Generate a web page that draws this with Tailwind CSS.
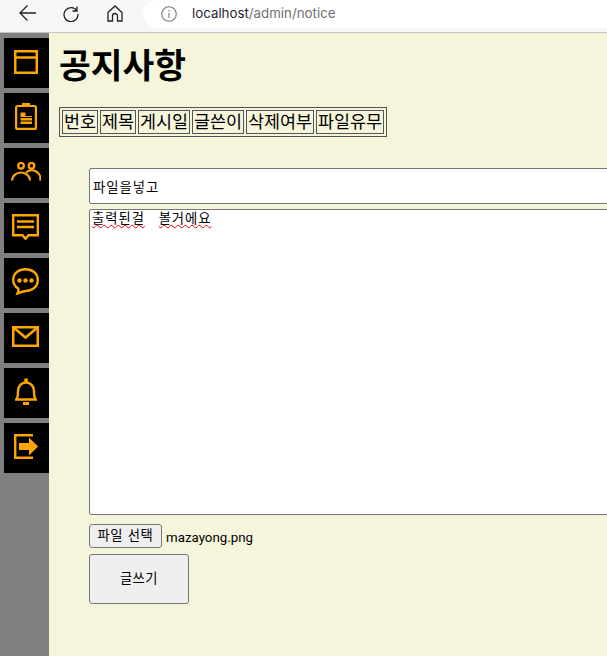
<!DOCTYPE html>
<html lang="ko">
  <head>
    <meta charset="UTF-8" />
    <title>공지사항</title>
    <script src="https://cdn.jsdelivr.net/npm/@tailwindcss/browser@4"></script>
  </head>
  <body class="w-[607px] h-[656px] overflow-hidden font-['Liberation_Sans','Noto_Sans_CJK_KR',sans-serif] text-black">
    <!-- browser bar -->
    <div class="h-[33px] bg-[#f7f7f7] border-b border-[#c4c4c4] flex items-center relative">
      <svg class="absolute left-[18px] top-[4px]" width="20" height="18" viewBox="0 0 20 18" fill="none" stroke="#222" stroke-width="1.3"><path d="M18 9H2M9.500 1.500L2 9l7.500 7.500"/></svg>
      <svg class="absolute left-[62px] top-[4px]" width="18" height="18" viewBox="0 0 18 18" fill="none" stroke="#222" stroke-width="1.3"><path d="M15 2.500V7h-4.500M15 7A7 7 0 1 0 16 10"/></svg>
      <svg class="absolute left-[107px] top-[5px]" width="16" height="17" viewBox="0 0 16 17" fill="none" stroke="#222" stroke-width="1.3"><path d="M1 7.500L8 1l7 6.500V16h-4.500v-5a2.500 2.500 0 0 0-5 0v5H1z"/></svg>
      <div class="ml-[143px] h-[28px] -mt-[5px] flex-1 bg-white rounded-l-[14px] flex items-center pl-[18px] gap-[15px]">
        <svg width="16" height="16" viewBox="0 0 16 16" fill="none" stroke="#777" stroke-width="1.100"><circle cx="8" cy="8" r="7.300"/><path d="M8 7v5M8 4v1.500"/></svg>
        <span class="text-[13.300px] font-['Inter','Liberation_Sans',sans-serif] text-[#6e7074]"><span class="text-[#1f2430]">localhost</span>/admin/notice</span>
      </div>
    </div>

    <div class="flex h-[623px]">
      <!-- sidebar -->
      <nav class="w-[49px] shrink-0 bg-[#808080] pl-1 pt-[5px] flex flex-col gap-[5px]">
        <a class="h-[50px] bg-black flex items-center justify-center pr-[2px] pb-[3px]">
          <svg width="24" height="24" viewBox="0 0 24 24" fill="none" stroke="#ffa500" stroke-width="2.500"><rect x="1.250" y="1.250" width="21.500" height="21.500"/><path d="M1 7.500h22"/></svg>
        </a>
        <a class="h-[50px] bg-black flex items-center justify-center pr-[2px] pb-[3px]">
          <svg width="22" height="27" viewBox="0 0 22 27" fill="none" stroke="#ffa500" stroke-width="2.200"><rect x="1.100" y="3" width="19.800" height="22.900" rx="1.500"/><path d="M7 2h8" stroke-width="4"/><path d="M5.500 9.500h5v3.500h6.500v8H5.500z" fill="#ffa500" stroke="none"/><path d="M5 14.500h12.500M5 18h12.500" stroke="#000" stroke-width="1"/></svg>
        </a>
        <a class="h-[50px] bg-black flex items-center justify-center pr-[2px] pb-[3px]">
          <svg width="30" height="19" viewBox="0 0 30 19" fill="none" stroke="#ffa500" stroke-width="2.200"><circle cx="10" cy="3.800" r="2.800"/><circle cx="20.500" cy="3.800" r="2.800"/><path d="M1 18.500a9 8 0 0 1 18 0M15 10.500a8.500 8 0 0 1 14 8"/></svg>
        </a>
        <a class="h-[50px] bg-black flex items-center justify-center pr-[2px] pb-[3px]">
          <svg width="27" height="26" viewBox="0 0 27 26" fill="none" stroke="#ffa500" stroke-width="2.400"><path d="M1.200 1.200h24.600v20H16.500l-3 3.500-3-3.500H1.200z"/><path d="M5 7.500h17M5 13h17" stroke-width="2.500"/></svg>
        </a>
        <a class="h-[50px] bg-black flex items-center justify-center pr-[2px] pb-[3px]">
          <svg width="27" height="27" viewBox="0 0 27 27" fill="none" stroke="#ffa500" stroke-width="2.400"><path d="M13.500 1.200c7 0 12.300 4.300 12.300 10.800S20.500 23 13.500 23c-2 0-4 1-8 2.500 1-2 1.200-3.200.7-5C3 18.500 1.200 15.500 1.200 12 1.200 5.500 6.500 1.200 13.500 1.200z"/><circle cx="7.500" cy="12.500" r="2.200" fill="#ffa500" stroke="none"/><circle cx="13.500" cy="12.500" r="2.200" fill="#ffa500" stroke="none"/><circle cx="19.500" cy="12.500" r="2.200" fill="#ffa500" stroke="none"/></svg>
        </a>
        <a class="h-[50px] bg-black flex items-center justify-center pr-[2px] pb-[3px]">
          <svg width="27" height="21" viewBox="0 0 27 21" fill="none" stroke="#ffa500" stroke-width="2.500"><rect x="1.250" y="1.250" width="24.500" height="18.500"/><path d="M1.500 1.500l12 10 12-10"/></svg>
        </a>
        <a class="h-[50px] bg-black flex items-center justify-center pr-[2px] pb-[3px]">
          <svg width="22" height="27" viewBox="0 0 22 27" fill="none" stroke="#ffa500" stroke-width="2.400"><path d="M1 21.500c1.500-1 2-3 2-8.500 0-5 3.500-8.500 8-8.500s8 3.500 8 8.500c0 5.500.5 7.500 2 8.500z"/><path d="M11 0.500v4" stroke-width="3.500"/><path d="M8 25.500h6" stroke-width="3"/></svg>
        </a>
        <a class="h-[50px] bg-black flex items-center justify-center pr-[2px] pb-[3px]">
          <svg width="24" height="25" viewBox="0 0 24 25" fill="none" stroke="#ffa500" stroke-width="2.400"><path d="M19 1.200H1.200v22.600H19"/><path d="M5 9h10V3.500l9 9-9 9V16H5z" fill="#ffa500" stroke="none"/></svg>
        </a>
      </nav>

      <!-- content -->
      <main class="flex-1 min-w-0 bg-[#f5f5dc] pt-[9px] pl-[10px] overflow-hidden">
        <h1 class="text-[34.500px] leading-[48px] font-bold">공지사항</h1>

        <table class="mt-[17px] border border-[#555] border-separate border-spacing-[2px] text-[17.400px] leading-[21px]">
          <thead>
            <tr>
              <th class="border border-[#555] px-px pt-px font-normal">번호</th>
              <th class="border border-[#555] px-px pt-px font-normal">제목</th>
              <th class="border border-[#555] px-px pt-px font-normal">게시일</th>
              <th class="border border-[#555] px-px pt-px font-normal">글쓴이</th>
              <th class="border border-[#555] px-px pt-px font-normal">삭제여부</th>
              <th class="border border-[#555] px-px pt-px font-normal">파일유무</th>
            </tr>
          </thead>
        </table>

        <form class="mt-[31px] ml-[30px] flex flex-col items-start">
          <input type="text" value="파일을넣고" class="w-[600px] h-[36px] bg-white border border-[#767676] rounded-[2px] px-[3px] text-[13.300px] tracking-[1px]" />
          <div class="mt-[5px] w-[600px] h-[306px] bg-white border border-[#767676] rounded-[2px] px-[2px] text-[13.300px] leading-[18px] tracking-[1px]">
            <span class="underline decoration-wavy decoration-red-600 decoration-1">출력된걸</span>
            <span class="ml-[9px] underline decoration-wavy decoration-red-600 decoration-1">볼거에요</span>
          </div>
          <div class="mt-[9px] flex items-center gap-[4px] text-[13.300px]">
            <button type="button" class="w-[73px] h-[24px] bg-[#efefef] border border-[#767676] rounded-[3px] tracking-[0.700px]">파일 선택</button>
            <span class="pt-[3px] font-['Roboto','Liberation_Sans',sans-serif]">mazayong.png</span>
          </div>
          <button type="button" class="mt-[6px] w-[100px] h-[50px] bg-[#efefef] border border-[#767676] rounded-[3px] text-[13.300px] tracking-[0.500px]">글쓰기</button>
        </form>
      </main>
    </div>
  </body>
</html>
